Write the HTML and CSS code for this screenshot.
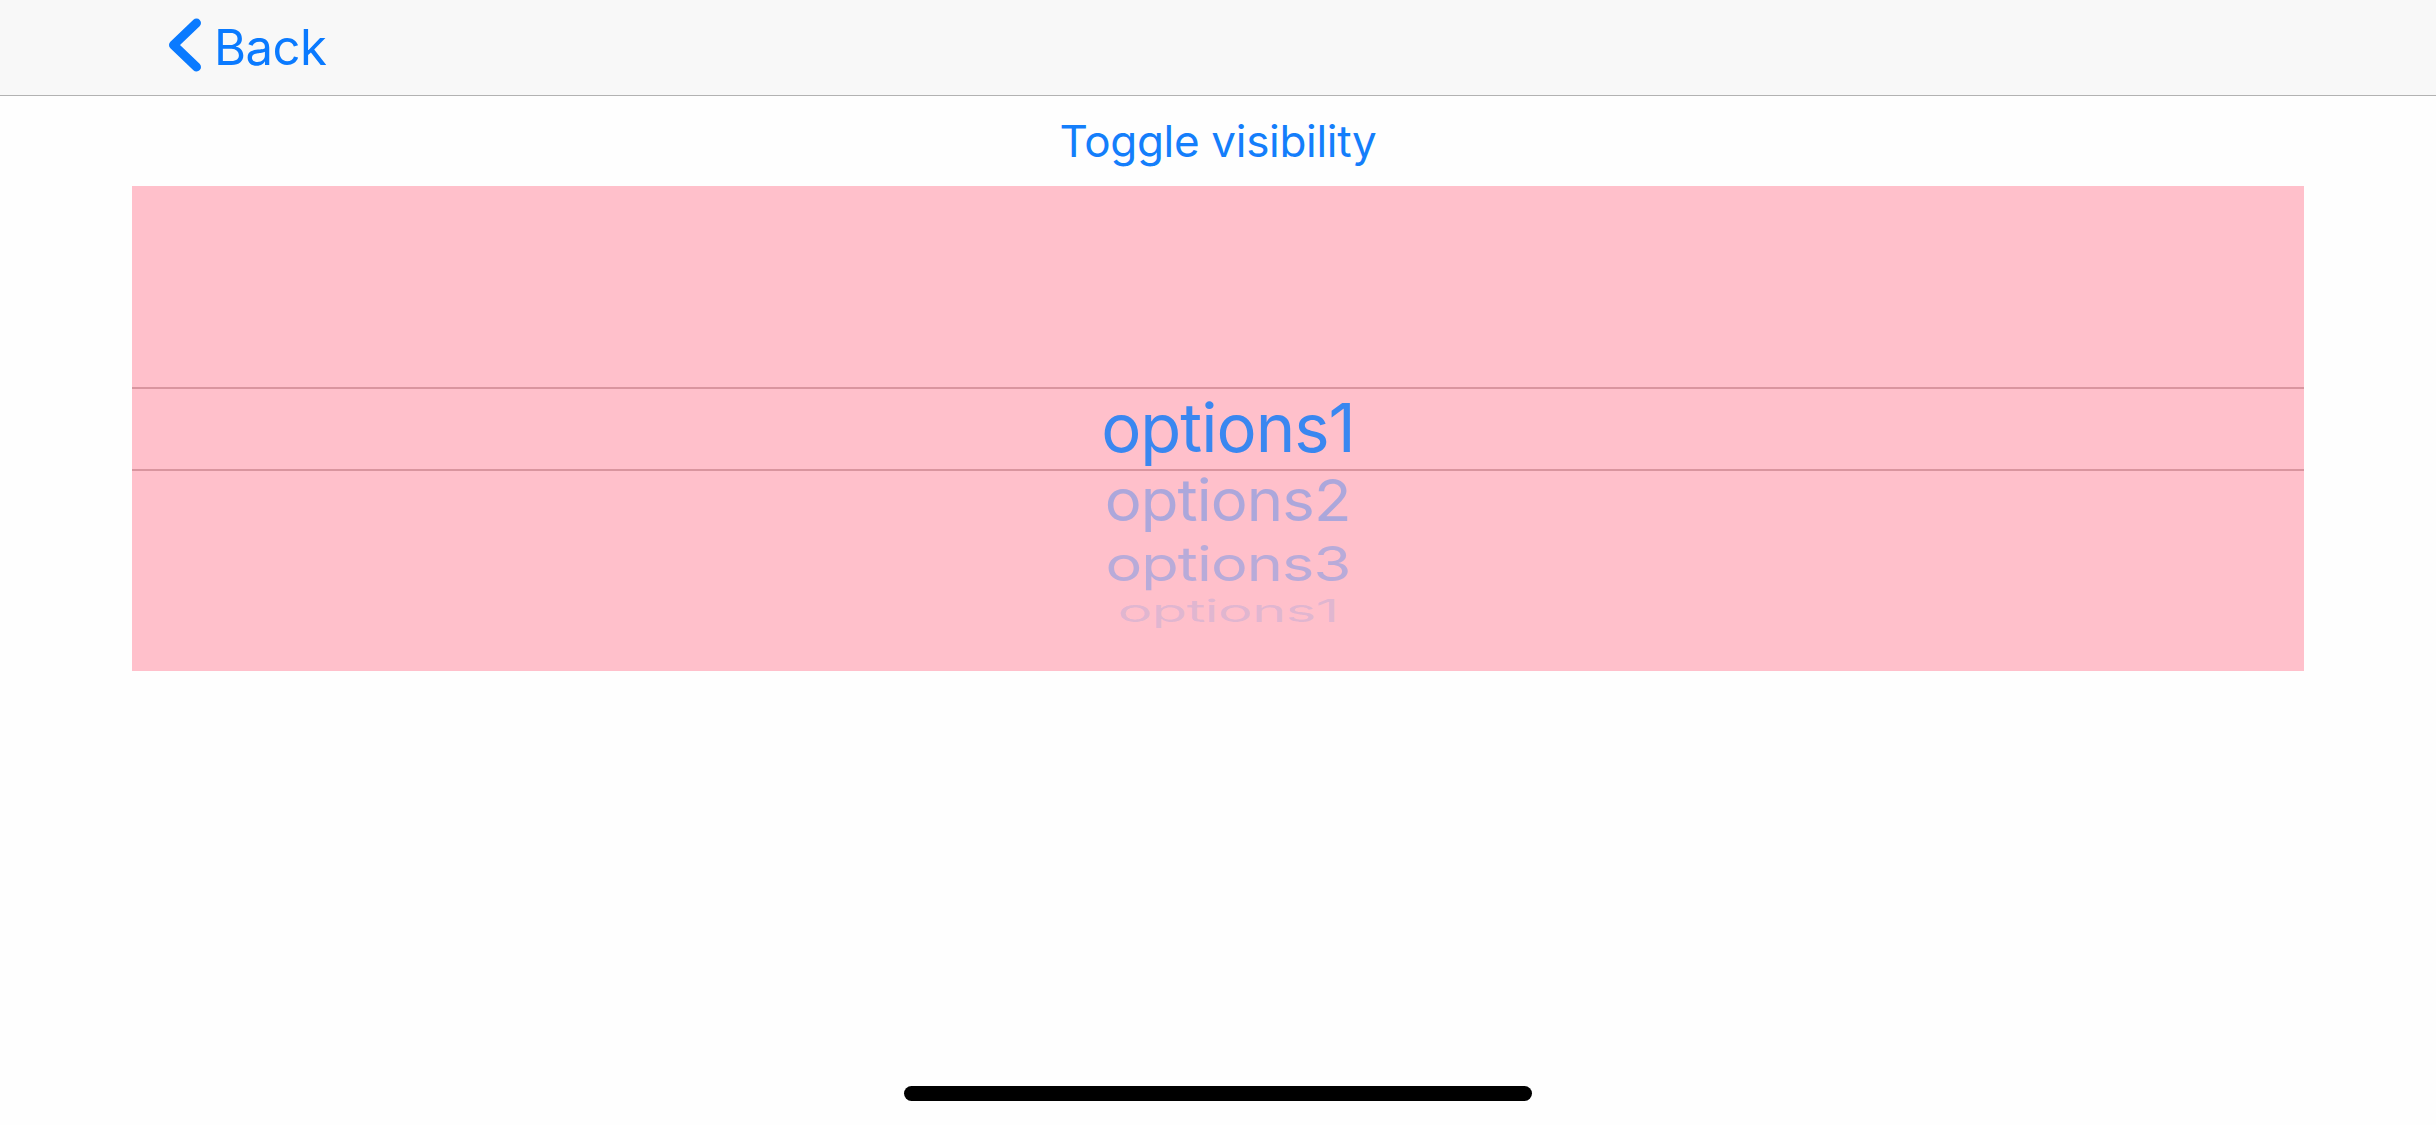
FILE: index.html
```html
<!DOCTYPE html>
<html>
<head>
<meta charset="utf-8">
<link rel="stylesheet" href="styles.css">
</head>
<body>
<div class="screen">
  <header class="nav">
    <div class="back">
      <svg class="chev" width="42" height="60" viewBox="0 0 42 60">
        <polyline points="32.5,6 9.5,28 32.5,50" fill="none" stroke="#0a7aff" stroke-width="9" stroke-linecap="round" stroke-linejoin="round"/>
      </svg>
      <span class="back-label">Back</span>
    </div>
  </header>
  <div class="toggle-row">
    <span class="toggle">Toggle visibility</span>
  </div>
  <div class="picker">
    <div class="band"></div>
    <div class="wheel">
      <div class="row r1">options1</div>
      <div class="row r2">options2</div>
      <div class="row r3">options3</div>
      <div class="row r4">options1</div>
    </div>
  </div>
  <div class="spacer"></div>
  <div class="home-row"><div class="home"></div></div>
</div>
</body>
</html>
```
FILE: styles.css
```css
html, body {
  margin: 0;
  padding: 0;
  background: #fefefe;
}
.screen {
  width: 2436px;
  height: 1125px;
  display: flex;
  flex-direction: column;
  font-family: Inter, "Liberation Sans", sans-serif;
  overflow: hidden;
}
.nav {
  height: 95px;
  flex: none;
  background: #f8f8f8;
  border-bottom: 1px solid #b2b2b2;
  display: flex;
  align-items: center;
  padding-left: 164px;
}
.back {
  display: flex;
  align-items: center;
  gap: 8px;
  color: #0a7aff;
  margin-top: -1px;
}
.chev {
  display: block;
}
.back-label {
  font-size: 49px;
  line-height: 1;
  letter-spacing: -0.5px;
}
.toggle-row {
  height: 90px;
  flex: none;
  display: flex;
  align-items: center;
  justify-content: center;
}
.toggle {
  font-size: 44px;
  line-height: 44px;
  color: #147efb;
  letter-spacing: -0.3px;
}
.picker {
  flex: none;
  height: 485px;
  margin: 0 132px;
  background: #ffc0cb;
  position: relative;
  overflow: hidden;
}
.band {
  position: absolute;
  left: 0;
  right: 0;
  top: 201px;
  height: 80px;
  border-top: 2px solid #d9959f;
  border-bottom: 2px solid #d9959f;
}
.wheel {
  padding-top: 202px;
  padding-left: 20px;
  display: flex;
  flex-direction: column;
  align-items: center;
}
.row {
  font-size: 67px;
  letter-spacing: -1px;
  color: #3a87f0;
  white-space: nowrap;
  transform-origin: center center;
}
.r1 {
  height: 80px;
  line-height: 80px;
}
.r2 {
  height: 64px;
  line-height: 64px;
  transform: scale(0.92, 0.86);
  color: rgba(58, 134, 240, 0.42);
}
.r3 {
  height: 64px;
  line-height: 64px;
  transform: scale(0.915, 0.72);
  color: rgba(58, 134, 240, 0.36);
}
.r4 {
  height: 30px;
  line-height: 30px;
  transform: scale(0.87, 0.47);
  color: rgba(58, 134, 240, 0.16);
}
.spacer {
  flex: 1;
}
.home-row {
  flex: none;
  height: 39px;
  display: flex;
  justify-content: center;
}
.home {
  width: 628px;
  height: 15px;
  border-radius: 8px;
  background: #000;
}
```
